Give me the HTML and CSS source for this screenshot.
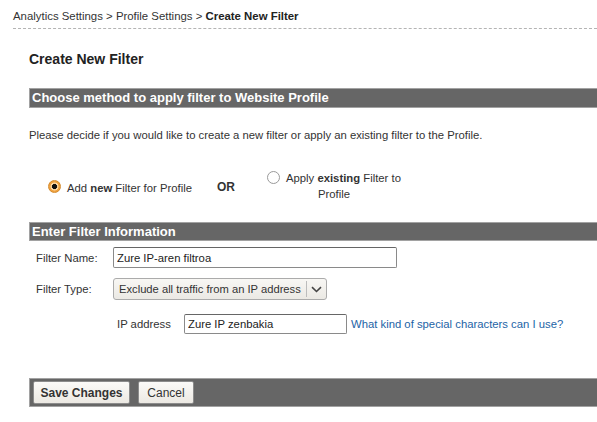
FILE: index.html
```html
<!DOCTYPE html>
<html>
<head>
<meta charset="utf-8">
<link rel="stylesheet" href="styles.css">
</head>
<body>
<div class="crumbs">Analytics Settings &gt; Profile Settings &gt; <b>Create New Filter</b></div>
<div class="main">
  <h1 class="title">Create New Filter</h1>
  <div class="bar bar-first">Choose method to apply filter to Website Profile</div>
  <p class="intro">Please decide if you would like to create a new filter or apply an existing filter to the Profile.</p>
  <div class="choice">
    <div class="opt opt-new"><span class="radio radio-on"></span><span class="opt-text">Add <b>new</b> Filter for Profile</span></div>
    <div class="or">OR</div>
    <div class="opt opt-existing"><span class="radio"></span>Apply <b>existing</b> Filter to Profile</div>
  </div>
  <div class="bar bar-second">Enter Filter Information</div>
  <div class="row row-name">
    <span class="label">Filter Name:</span>
    <input class="field field-name" type="text" value="Zure IP-aren filtroa">
  </div>
  <div class="row row-type">
    <span class="label">Filter Type:</span>
    <div class="select">
      <span class="select-text">Exclude all traffic from an IP address</span>
      <span class="select-arrow"><svg width="11" height="7" viewBox="0 0 11 7"><path d="M1 1.2 L5.5 5.5 L10 1.2" fill="none" stroke="#444" stroke-width="1.6"/></svg></span>
    </div>
  </div>
  <div class="row row-ip">
    <span class="label label-ip">IP address</span>
    <input class="field field-ip" type="text" value="Zure IP zenbakia">
    <a class="help" href="#">What kind of special characters can I use?</a>
  </div>
  <div class="footer">
    <button class="btn btn-save">Save Changes</button>
    <button class="btn btn-cancel">Cancel</button>
  </div>
</div>
</body>
</html>
```
FILE: styles.css
```css
html, body {
  margin: 0;
  padding: 0;
  background: #fff;
}
body {
  font-family: "Liberation Sans", Arial, sans-serif;
  font-size: 11.3px;
  color: #333;
}
.crumbs {
  margin-left: 13px;
  padding-top: 9px;
  height: 19px;
  box-sizing: content-box;
  line-height: 14px;
  font-size: 11.4px;
  color: #333;
  border-bottom: 1px dashed #b4b4b4;
}
.crumbs b {
  color: #222;
}
.main {
  padding-left: 29px;
}
.title {
  margin: 21px 0 0;
  font-size: 14px;
  line-height: 18px;
  font-weight: bold;
  color: #222;
}
.bar {
  height: 18px;
  line-height: 18px;
  border: 1px solid #a2a2a2;
  border-right: 0;
  background: #666;
  color: #fff;
  font-size: 13px;
  font-weight: bold;
  padding-left: 2px;
}
.bar-first {
  margin-top: 20px;
}
.intro {
  margin: 20px 0 0;
  line-height: 14px;
  font-size: 11.3px;
  color: #333;
}
.choice {
  display: flex;
  align-items: center;
  margin-top: 28px;
  height: 32px;
  padding-left: 19px;
  color: #333;
}
.opt-new {
  display: flex;
  align-items: center;
}
.opt-text {
  margin-left: 6px;
  padding-top: 3px;
}
.or {
  margin-left: 25px;
  font-weight: bold;
  font-size: 12px;
  color: #333;
  padding-top: 2px;
}
.opt-existing {
  margin-left: 28px;
  width: 142px;
  text-align: center;
  line-height: 16px;
}
.opt-existing .radio {
  vertical-align: -2px;
  margin-right: 6px;
}
.radio {
  display: inline-block;
  box-sizing: border-box;
  width: 13px;
  height: 13px;
  border-radius: 50%;
  border: 1px solid #9a9a9a;
  background: #fff;
}
.radio-on {
  border: 1px solid #d48a2c;
  background: radial-gradient(circle, #111 0, #111 2.3px, #f7c684 2.8px, #fbe1ba 3.6px, #f0a23e 4.3px);
}
.bar-second {
  margin-top: 20px;
  height: 17px;
  line-height: 17px;
}
.row {
  display: flex;
  align-items: center;
  color: #333;
}
.label {
  width: 77px;
  padding-left: 7px;
  flex: none;
}
.row-name {
  margin-top: 6px;
}
.row-type {
  margin-top: 10px;
}
.row-ip {
  margin-top: 14px;
  padding-left: 81px;
}
.label-ip {
  width: 67px;
}
.field {
  box-sizing: border-box;
  font-family: "Liberation Sans", Arial, sans-serif;
  font-size: 11.3px;
  color: #222;
  border: 1px solid #8a8a8a;
  border-top-color: #666;
  border-radius: 2px;
  padding: 0 3px;
  margin: 0;
  background: #fff;
}
.field-name {
  width: 284px;
  height: 21px;
}
.field-ip {
  width: 163px;
  height: 20px;
}
.select {
  box-sizing: border-box;
  display: flex;
  align-items: stretch;
  width: 214px;
  height: 22px;
  border: 1px solid #ababab;
  border-radius: 3px;
  background: linear-gradient(#f8f7f4, #ebe9e4);
  color: #333;
}
.select-text {
  flex: 1;
  padding-left: 5px;
  line-height: 20px;
  font-size: 11.2px;
  white-space: nowrap;
}
.select-arrow {
  width: 19px;
  display: flex;
  align-items: center;
  justify-content: center;
  border-left: 1px solid #bcbcbc;
  margin: 2px 0;
}
.help {
  margin-left: 4px;
  color: #1c63a6;
  text-decoration: none;
  font-size: 11.3px;
}
.footer {
  margin-top: 44px;
  height: 27px;
  border: 1px solid #a2a2a2;
  border-right: 0;
  background: #666;
  display: flex;
  align-items: center;
  padding-left: 3px;
  gap: 8px;
}
.btn {
  box-sizing: border-box;
  height: 23px;
  margin: 0;
  font-family: "Liberation Sans", Arial, sans-serif;
  font-size: 12px;
  color: #333;
  background: linear-gradient(#fbfaf8, #ece9e3);
  border: 1px solid #8c8c8c;
  border-radius: 2px;
}
.btn-save {
  width: 97px;
  font-weight: bold;
}
.btn-cancel {
  width: 56px;
}
```
